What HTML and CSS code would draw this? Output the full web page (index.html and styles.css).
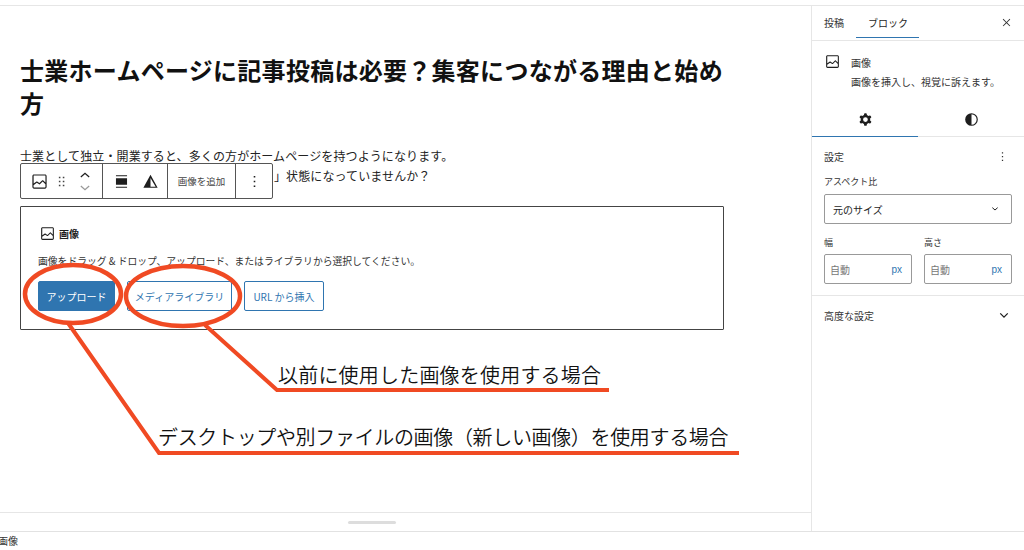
FILE: index.html
```html
<!DOCTYPE html>
<html lang="ja">
<head>
  <meta charset="UTF-8">
  <title>画像ブロック</title>
  <meta name="viewport" content="width=device-width, initial-scale=1">
  <link rel="stylesheet" href="styles.css">
</head>
<body>
  <svg class="icon-defs" width="0" height="0" aria-hidden="true">
    <symbol id="icon-image" viewBox="0 0 24 24">
      <path d="M19 3H5c-1.1 0-2 .9-2 2v14c0 1.1.9 2 2 2h14c1.1 0 2-.9 2-2V5c0-1.1-.9-2-2-2zM5 4.500h14c.3 0 .5.2.5.5v8.400l-3-2.900c-.3-.3-.8-.3-1 0L11.900 14 9 12c-.3-.2-.6-.2-.8 0l-3.600 2.600V5c-.1-.3.1-.5.4-.5zm14 15H5c-.3 0-.5-.2-.5-.5v-2.400l4.100-3 3 1.900c.3.2.7.2.9-.1L16 12l3.500 3.400V19c0 .3-.2.5-.5.500z"/>
    </symbol>
    <symbol id="icon-dots" viewBox="0 0 24 24">
      <path d="M13 19h-2v-2h2v2zm0-6h-2v-2h2v2zm0-6h-2V5h2v2z"/>
    </symbol>
  </svg>

  <div class="app">
    <div class="workspace">
      <main class="editor">
        <div class="canvas">
          <h1 class="post-title">士業ホームページに記事投稿は必要？集客につながる理由と始め方</h1>
          <p class="post-text">士業として独立・開業すると、多くの方がホームページを持つようになります。</p>
          <p class="post-text post-tail">」状態になっていませんか？</p>

          <div class="block-toolbar">
            <div class="tool-group tool-group-first">
              <svg class="tool-icon" viewBox="0 0 24 24"><use href="#icon-image"/></svg>
              <svg class="tool-drag" viewBox="0 0 8 14"><path d="M0 1h2v2H0zM5 1h2v2H5zM0 6h2v2H0zM5 6h2v2H5zM0 11h2v2H0zM5 11h2v2H5z"/></svg>
              <div class="tool-mover">
                <svg viewBox="0 0 12 7"><path d="M1 6l5-4.500L11 6" fill="none" stroke="#1e1e1e" stroke-width="1.500"/></svg>
                <svg viewBox="0 0 12 7"><path d="M1 1l5 4.500L11 1" fill="none" stroke="#999" stroke-width="1.500"/></svg>
              </div>
            </div>
            <div class="tool-group tool-group-align">
              <svg class="tool-icon" viewBox="0 0 24 24"><path d="M5 4h14v1.500H5zM5 8h14v8H5zM5 18.500h14V20H5z"/></svg>
              <svg class="tool-icon" viewBox="0 0 24 24"><path d="M12 3.500L3 20h18L12 3.500zm0 4.200L18.500 18.500H12V7.700z"/></svg>
            </div>
            <div class="tool-group tool-add">画像を追加</div>
            <div class="tool-group tool-more">
              <svg class="tool-icon" viewBox="0 0 24 24"><use href="#icon-dots"/></svg>
            </div>
          </div>

          <section class="image-block">
            <div class="image-label">
              <svg viewBox="0 0 24 24"><use href="#icon-image"/></svg>
              <span>画像</span>
            </div>
            <p class="image-help">画像をドラッグ &amp; ドロップ、アップロード、またはライブラリから選択してください。</p>
            <div class="image-actions">
              <button class="btn btn-primary" type="button">アップロード</button>
              <button class="btn btn-media" type="button">メディアライブラリ</button>
              <button class="btn btn-url" type="button">URL から挿入</button>
            </div>
          </section>
        </div>
        <div class="resize-bar"><span class="resize-handle"></span></div>
      </main>

      <aside class="sidebar">
        <div class="side-tabs">
          <span class="side-tab">投稿</span>
          <span class="side-tab side-tab-active">ブロック</span>
          <svg class="side-close" viewBox="0 0 24 24"><path d="M13 12l5-5-1-1-5 5-5-5-1 1 5 5-5 5 1 1 5-5 5 5 1-1z"/></svg>
        </div>
        <div class="block-card">
          <svg viewBox="0 0 24 24"><use href="#icon-image"/></svg>
          <div>
            <div class="block-card-title">画像</div>
            <div class="block-card-desc">画像を挿入し、視覚に訴えます。</div>
          </div>
        </div>
        <div class="inspector-tabs">
          <div class="inspector-tab inspector-tab-active">
            <svg viewBox="0 0 24 24"><path fill-rule="evenodd" d="M10.289 4.836A1 1 0 0111.275 4h1.306a1 1 0 01.987.836l.244 1.466c.787.26 1.503.679 2.108 1.218l1.393-.522a1 1 0 011.216.437l.653 1.130a1 1 0 01-.23 1.273l-1.148.944a6.025 6.025 0 010 2.435l1.149.946a1 1 0 01.23 1.272l-.653 1.130a1 1 0 01-1.216.437l-1.394-.522c-.605.54-1.320.958-2.108 1.218l-.244 1.466a1 1 0 01-.987.836h-1.306a1 1 0 01-.986-.836l-.244-1.466a5.995 5.995 0 01-2.108-1.218l-1.394.522a1 1 0 01-1.217-.436l-.653-1.131a1 1 0 01.23-1.272l1.149-.946a6.026 6.026 0 010-2.435l-1.148-.944a1 1 0 01-.23-1.272l.653-1.131a1 1 0 011.217-.437l1.393.522a5.994 5.994 0 012.108-1.218l.244-1.466zM14.929 12a3 3 0 11-6 0 3 3 0 016 0z"/></svg>
          </div>
          <div class="inspector-tab">
            <svg viewBox="0 0 24 24"><path fill-rule="evenodd" d="M12 4a8 8 0 100 16 8 8 0 000-16zm0 1.500v13a6.500 6.500 0 000-13z"/></svg>
          </div>
        </div>
        <section class="panel">
          <div class="panel-head">
            <span>設定</span>
            <svg viewBox="0 0 24 24"><use href="#icon-dots"/></svg>
          </div>
          <div class="field-label">アスペクト比</div>
          <div class="select-box">
            <span>元のサイズ</span>
            <svg viewBox="0 0 12 8"><path d="M2 2l4 3.500L10 2" fill="none" stroke="#1e1e1e" stroke-width="1.500"/></svg>
          </div>
          <div class="size-row">
            <div>
              <div class="field-label">幅</div>
              <div class="size-input"><span>自動</span><b>px</b></div>
            </div>
            <div>
              <div class="field-label">高さ</div>
              <div class="size-input"><span>自動</span><b>px</b></div>
            </div>
          </div>
        </section>
        <div class="panel-advanced">
          <span>高度な設定</span>
          <svg viewBox="0 0 12 8"><path d="M1.500 1.500L6 6l4.500-4.500" fill="none" stroke="#1e1e1e" stroke-width="1.500"/></svg>
        </div>
      </aside>
    </div>
    <footer class="status-bar">画像</footer>
  </div>

  <!-- 注釈は画面の上に重ねる -->
  <svg class="notes" viewBox="0 0 1024 550" aria-hidden="true">
    <ellipse cx="73" cy="294" rx="48" ry="29"/>
    <ellipse cx="183" cy="296" rx="57" ry="30"/>
    <path class="note-line" d="M68 323L159 453H739"/>
    <path class="note-line" d="M205 325L277 390H609"/>
  </svg>
  <div class="note note-one">以前に使用した画像を使用する場合</div>
  <div class="note note-two">デスクトップや別ファイルの画像（新しい画像）を使用する場合</div>
</body>
</html>
```

FILE: styles.css
```css
* {
  box-sizing: border-box;
}
html, body {
  margin: 0;
  padding: 0;
  height: 550px;
  overflow: hidden;
}
body {
  position: relative;
  background: #fff;
  color: #1e1e1e;
  font-family: "Noto Sans CJK JP", "Noto Sans", sans-serif;
}
svg {
  display: block;
  fill: currentColor;
}
.icon-defs {
  position: absolute;
}
.app {
  height: 550px;
  padding-top: 5px;
  display: flex;
  flex-direction: column;
}
.workspace {
  flex: 1;
  min-height: 0;
  display: flex;
  border-top: 1px solid #e6e6e6;
  border-bottom: 1px solid #e2e2e2;
}
.editor {
  width: 811px;
  display: flex;
  flex-direction: column;
}
.canvas {
  position: relative;
  flex: 1;
  padding: 47px 87px 0 20px;
  border-bottom: 1px solid #e6e6e6;
}
.post-title {
  margin: 0 0 27px;
  font-size: 24px;
  line-height: 33px;
  font-weight: 700;
  letter-spacing: 0.28px;
  color: #111;
}
.post-text {
  margin: 0;
  font-size: 12px;
  line-height: 20px;
  letter-spacing: 0.11px;
  color: #222;
}
.post-tail {
  margin: 0 0 20px;
  padding-left: 254px;
}
.block-toolbar {
  position: absolute;
  left: 20px;
  top: 157px;
  width: 253px;
  height: 36px;
  display: flex;
  background: #fff;
  border: 1px solid #555;
  border-radius: 2px;
}
.tool-group {
  display: flex;
  align-items: center;
  border-right: 1px solid #555;
}
.tool-group:last-child {
  border-right: 0;
}
.tool-icon {
  width: 19px;
  height: 19px;
  flex: none;
}
.tool-group-first {
  width: 82px;
  padding-left: 9px;
}
.tool-drag {
  width: 8px;
  height: 11px;
  margin-left: 9px;
  color: #444;
}
.tool-mover {
  margin-left: 14px;
  display: flex;
  flex-direction: column;
  gap: 7px;
}
.tool-mover svg {
  width: 10px;
  height: 6px;
}
.tool-group-align {
  width: 65px;
  padding-left: 9px;
  gap: 10px;
}
.tool-add {
  width: 68px;
  justify-content: center;
  font-size: 9.500px;
  color: #444;
}
.tool-more {
  flex: 1;
  justify-content: center;
}
.image-block {
  width: 704px;
  height: 124px;
  padding: 18px 17px 0;
  border: 1px solid #444;
  border-radius: 1px;
}
.image-label {
  display: flex;
  align-items: center;
  gap: 3px;
  height: 17px;
  margin-left: 1px;
  font-size: 10px;
  font-weight: 700;
}
.image-label svg {
  width: 17px;
  height: 17px;
}
.image-help {
  margin: 11px 0 0;
  font-size: 9.800px;
  line-height: 16px;
  color: #333;
}
.image-actions {
  display: flex;
  gap: 12px;
  margin-top: 12px;
}
.btn {
  height: 30px;
  padding: 0;
  font-family: inherit;
  font-size: 10px;
  border: 1px solid #2f75b0;
  border-radius: 2px;
  background: #fff;
  color: #2f75b0;
}
.btn-primary {
  width: 77px;
  background: #2f75b0;
  color: #fff;
}
.btn-media {
  width: 105px;
}
.btn-url {
  width: 80px;
}
.resize-bar {
  height: 18px;
  display: flex;
  align-items: center;
  justify-content: center;
  padding-right: 68px;
}
.resize-handle {
  width: 48px;
  height: 3px;
  background: #ddd;
  border-radius: 2px;
}
.sidebar {
  flex: 1;
  border-left: 1px solid #e6e6e6;
}
.side-tabs {
  height: 35px;
  display: flex;
  align-items: center;
  padding: 0 10px 2px 12px;
  border-bottom: 1px solid #e6e6e6;
  font-size: 10px;
  color: #333;
  position: relative;
}
.side-tab {
  margin-right: 24px;
}
.side-tab-active {
  position: relative;
  color: #1e1e1e;
}
.side-tab-active::after {
  content: "";
  position: absolute;
  left: -12px;
  right: -11px;
  top: 22px;
  height: 1px;
  background: #2f75b0;
}
.side-close {
  width: 15px;
  height: 15px;
  margin-left: auto;
}
.block-card {
  display: flex;
  gap: 10px;
  padding: 12px 12px 0;
  height: 60px;
  font-size: 10px;
  line-height: 19px;
  color: #333;
}
.block-card svg {
  width: 17px;
  height: 17px;
  flex: none;
  color: #1e1e1e;
}
.inspector-tabs {
  height: 36px;
  display: flex;
  border-bottom: 1px solid #e6e6e6;
}
.inspector-tab {
  flex: 1;
  display: flex;
  align-items: center;
  justify-content: center;
  padding-top: 1px;
}
.inspector-tab-active {
  border-bottom: 1px solid #2f75b0;
  margin-bottom: -1px;
}
.inspector-tab svg {
  width: 19px;
  height: 19px;
}
.panel {
  padding: 0 12px 11px;
  border-bottom: 1px solid #e6e6e6;
}
.panel-head {
  display: flex;
  align-items: center;
  justify-content: space-between;
  height: 20px;
  margin-top: 9px;
  font-size: 10px;
  color: #333;
}
.panel-head svg {
  width: 15px;
  height: 15px;
  margin-right: 2px;
}
.field-label {
  font-size: 9px;
  line-height: 12px;
  color: #333;
}
.panel-head + .field-label {
  margin-top: 10px;
}
.select-box {
  height: 30px;
  margin-top: 6px;
  display: flex;
  align-items: center;
  justify-content: space-between;
  padding: 0 12px 0 8px;
  border: 1px solid #999;
  border-radius: 2px;
  font-size: 10px;
}
.select-box svg {
  width: 8px;
  height: 6px;
}
.size-row {
  display: grid;
  grid-template-columns: 88px 88px;
  gap: 12px;
  margin-top: 13px;
}
.size-input {
  height: 30px;
  margin-top: 5px;
  display: flex;
  align-items: center;
  justify-content: space-between;
  padding: 0 9px 0 5px;
  border: 1px solid #999;
  border-radius: 2px;
  font-size: 10px;
  color: #777;
}
.size-input b {
  font-family: "Liberation Sans", sans-serif;
  font-weight: 400;
  color: #2f75b0;
}
.panel-advanced {
  height: 38px;
  display: flex;
  align-items: center;
  justify-content: space-between;
  padding: 0 15px 0 12px;
  font-size: 10px;
  color: #333;
}
.panel-advanced svg {
  width: 10px;
  height: 7px;
}
.status-bar {
  height: 18px;
  margin-left: -2px;
  font-size: 10px;
  line-height: 18px;
  color: #333;
}
.notes {
  position: absolute;
  left: 0;
  top: 0;
  width: 1024px;
  height: 550px;
  fill: none;
  stroke: #f04a23;
  stroke-width: 4.500;
}
.notes .note-line {
  stroke-width: 4;
}
.note {
  position: absolute;
  font-size: 20px;
  line-height: 28px;
  font-weight: 350;
  white-space: nowrap;
  color: #111;
}
.note-one {
  left: 278px;
  top: 361px;
  letter-spacing: 0.2px;
}
.note-two {
  left: 158px;
  top: 423px;
  letter-spacing: -0.34px;
}
```
